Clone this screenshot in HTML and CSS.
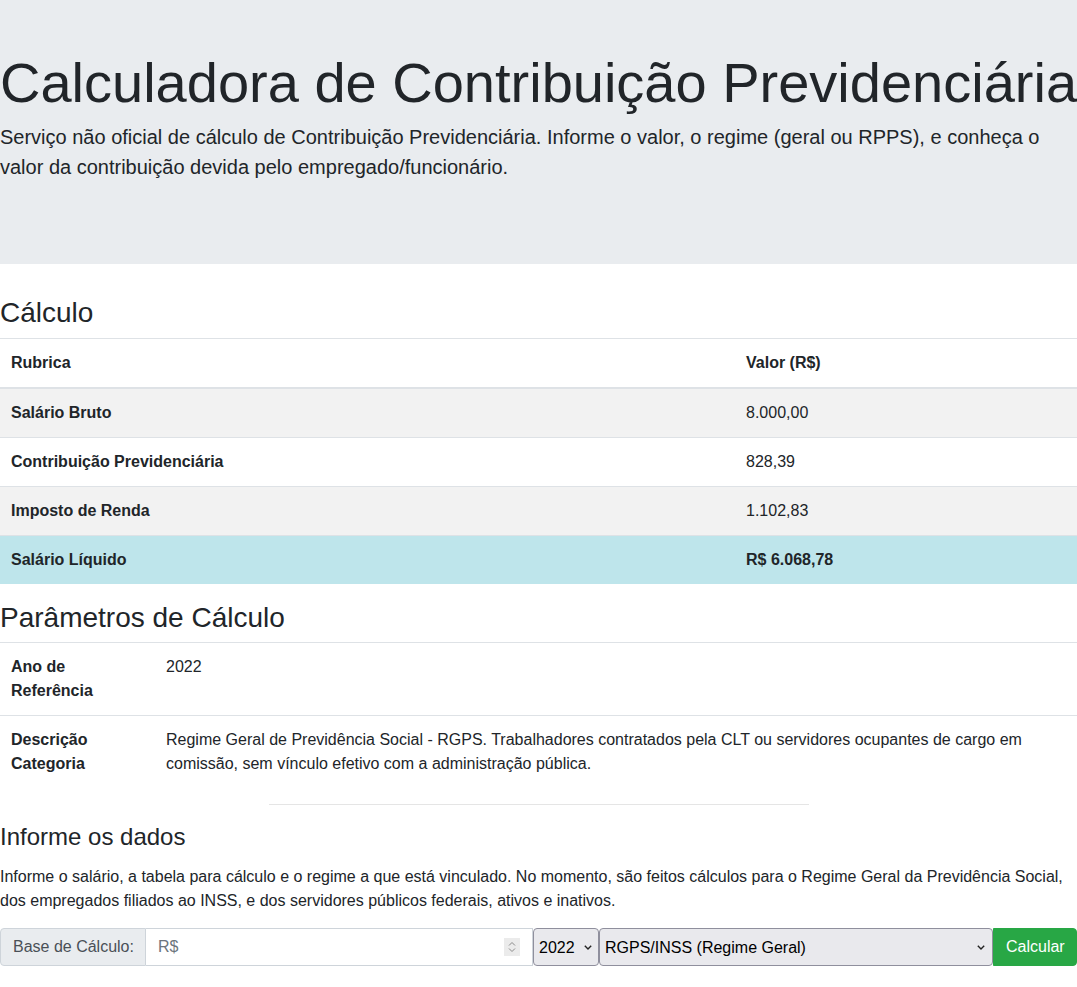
FILE: index.html
```html
<!DOCTYPE html>
<html lang="pt-BR">
<head>
<meta charset="utf-8">
<title>Calculadora de Contribuição Previdenciária</title>
<link rel="stylesheet" href="styles.css">
</head>
<body>
<header class="jumbotron">
  <h1 class="display">Calculadora de Contribuição Previdenciária</h1>
  <p class="lead">Serviço não oficial de cálculo de Contribuição Previdenciária. Informe o valor, o regime (geral ou RPPS), e conheça o valor da contribuição devida pelo empregado/funcionário.</p>
</header>

<main class="content">
  <h3 class="section-title">Cálculo</h3>
  <table class="table table-striped table-calc">
    <thead>
      <tr><th class="col-rubrica">Rubrica</th><th>Valor (R$)</th></tr>
    </thead>
    <tbody>
      <tr><th>Salário Bruto</th><td>8.000,00</td></tr>
      <tr><th>Contribuição Previdenciária</th><td>828,39</td></tr>
      <tr><th>Imposto de Renda</th><td>1.102,83</td></tr>
      <tr class="row-info"><th>Salário Líquido</th><th>R$ 6.068,78</th></tr>
    </tbody>
  </table>

  <h3 class="section-title">Parâmetros de Cálculo</h3>
  <table class="table">
    <tbody>
      <tr><th class="col-param">Ano de Referência</th><td>2022</td></tr>
      <tr><th class="col-param">Descrição Categoria</th><td>Regime Geral de Previdência Social - RGPS. Trabalhadores contratados pela CLT ou servidores ocupantes de cargo em comissão, sem vínculo efetivo com a administração pública.</td></tr>
    </tbody>
  </table>

  <hr class="divider">

  <h4 class="sub-title">Informe os dados</h4>
  <p class="intro">Informe o salário, a tabela para cálculo e o regime a que está vinculado. No momento, são feitos cálculos para o Regime Geral da Previdência Social, dos empregados filiados ao INSS, e dos servidores públicos federais, ativos e inativos.</p>

  <form class="input-group" onsubmit="return false">
    <span class="input-prepend">Base de Cálculo:</span>
    <span class="number-field">
      <input class="number-input" type="text" placeholder="R$">
      <span class="spinner" aria-hidden="true">
        <svg width="16" height="18" viewBox="0 0 16 18"><path d="M5 7.5 L8 4.5 L11 7.5" fill="none" stroke="#8a8a8a" stroke-width="1"/><path d="M5 10.5 L8 13.5 L11 10.5" fill="none" stroke="#8a8a8a" stroke-width="1"/></svg>
      </span>
    </span>
    <select class="native-select select-year"><option>2022</option></select>
    <select class="native-select select-regime"><option>RGPS/INSS (Regime Geral)</option></select>
    <button class="btn-success" type="submit">Calcular</button>
  </form>
</main>
</body>
</html>
```
FILE: styles.css
```css
* { box-sizing: border-box; }

html, body {
  margin: 0;
  padding: 0;
}

body {
  font-family: "Liberation Sans", Arial, sans-serif;
  font-size: 16px;
  line-height: 1.5;
  color: #212529;
  background: #fff;
}

.jumbotron {
  background: #e9ecef;
  padding: 49px 0 66px;
  margin-bottom: 32px;
}

.display {
  font-size: 56px;
  font-weight: 400;
  line-height: 1.2;
  margin: 0 0 6px;
  white-space: nowrap;
}

.lead {
  font-size: 20px;
  font-weight: 400;
  line-height: 1.5;
  margin: 0 0 16px;
}

.section-title {
  font-size: 28px;
  font-weight: 400;
  line-height: 1.2;
  margin: 0 0 8px;
}

.sub-title {
  font-size: 24px;
  font-weight: 400;
  line-height: 1.2;
  margin: 0 0 13px;
}

.table {
  width: 100%;
  border-collapse: collapse;
  margin-bottom: 16px;
}

.table-calc {
  margin-bottom: 17px;
}

.table th,
.table td {
  padding: 12px;
  text-align: left;
  vertical-align: top;
  border-top: 1px solid #dee2e6;
  line-height: 24px;
}

.table th:first-child {
  padding-left: 11px;
}

.table th { font-weight: 700; }
.table td { font-weight: 400; }

.table thead th {
  border-bottom: 2px solid #dee2e6;
}

.table-striped tbody tr:nth-child(odd) {
  background: #f2f2f2;
}

.table-striped tbody tr.row-info {
  background: #bee5eb;
}

.col-rubrica { width: 734px; }
.col-param { width: 154px; }

.divider {
  width: 540px;
  margin: 16px auto 18px;
  border: 0;
  border-top: 1px solid #e5e5e5;
  height: 0;
}

.intro {
  margin: 0 0 15px;
}

.input-group {
  display: flex;
  align-items: stretch;
  height: 38px;
  margin: 0;
}

.input-prepend {
  display: flex;
  align-items: center;
  padding: 0 12px;
  width: 146px;
  background: #e9ecef;
  color: #495057;
  border: 1px solid #ced4da;
  border-radius: 4px 0 0 4px;
  white-space: nowrap;
}

.number-field {
  display: flex;
  align-items: center;
  width: 387px;
  border: 1px solid #ced4da;
  border-left: 0;
  background: #fff;
  padding: 0 12px 0 12px;
}

.number-input {
  flex: 1;
  min-width: 0;
  border: 0;
  outline: none;
  font: inherit;
  color: #495057;
  background: transparent;
  padding: 0;
}

.number-input::placeholder { color: #6c757d; }

.spinner {
  display: flex;
  width: 16px;
  height: 18px;
  background: #ebebeb;
}

.native-select {
  appearance: none;
  -webkit-appearance: none;
  font-family: "Liberation Sans", Arial, sans-serif;
  font-size: 16px;
  color: #000;
  background-color: #e9e9ed;
  background-image: url("data:image/svg+xml,%3Csvg xmlns='http://www.w3.org/2000/svg' width='8' height='5' viewBox='0 0 8 5'%3E%3Cpath d='M0.8 0.8 L4 4 L7.2 0.8' fill='none' stroke='%23222' stroke-width='1.4'/%3E%3C/svg%3E");
  background-repeat: no-repeat;
  border: 1px solid #8f8f9d;
  border-radius: 4px;
  padding: 0 18px 0 5px;
  margin: 0;
  height: 38px;
}

.select-year {
  width: 66px;
  background-position: right 6px center;
}

.select-regime {
  width: 394px;
  background-position: right 7px center;
}

.btn-success {
  width: 84px;
  font: inherit;
  color: #fff;
  background: #28a745;
  border: 1px solid #28a745;
  border-radius: 0 4px 4px 0;
  padding: 0 12px;
  cursor: pointer;
}
```
